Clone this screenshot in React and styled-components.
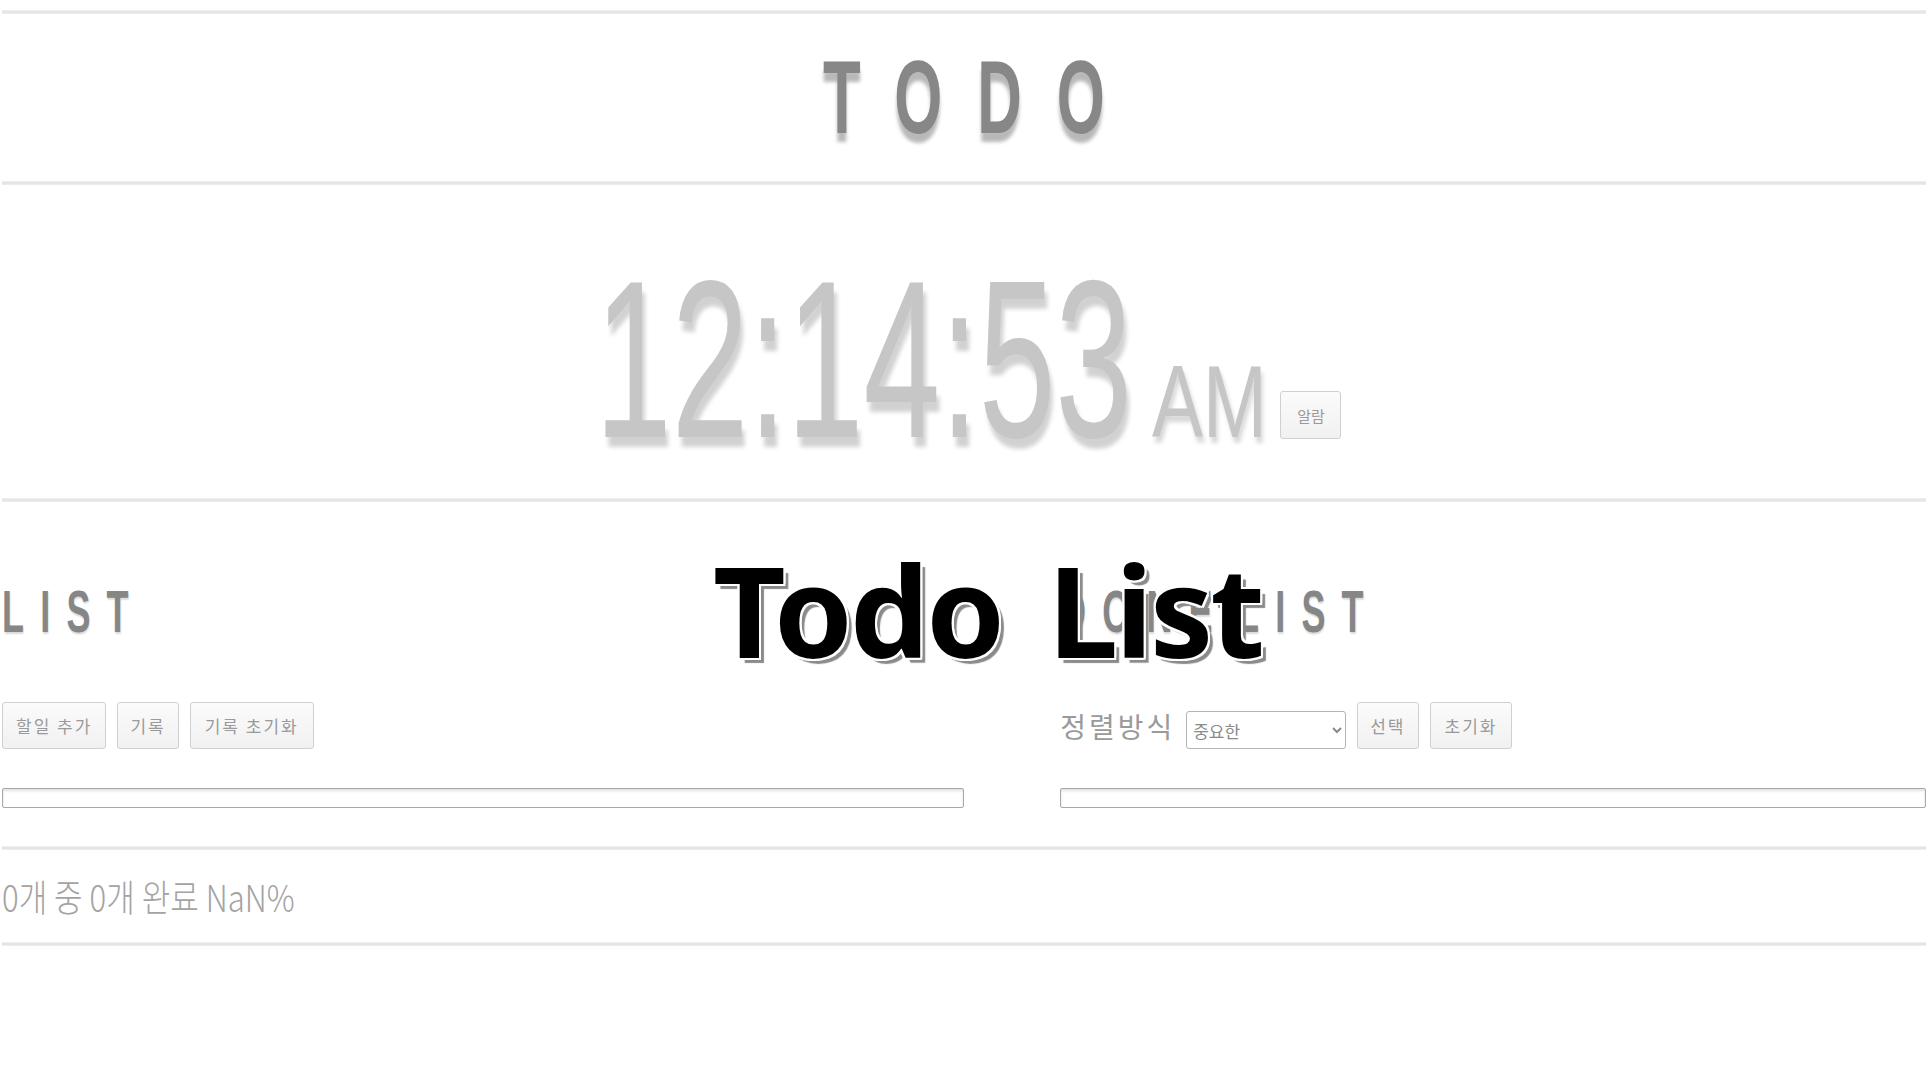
import React from "react";
import styled, { createGlobalStyle } from "styled-components";

const GlobalStyle = createGlobalStyle`
  html, body { margin: 0; padding: 0; background: #ffffff; }
  body { font-family: "Noto Sans CJK KR", "Noto Sans", sans-serif; }
  * { box-sizing: border-box; }
`;

const Page = styled.div`
  position: relative;
  width: 1928px;
  min-height: 1071px;
  padding: 10px 2px 0;
  overflow: hidden;
`;

const Rule = styled.div`
  height: 4px;
  background: linear-gradient(#f1f1f1, #e2e2e2 50%, #eeeeee);
`;

const Header = styled.header`
  height: 167px;
  display: flex;
  align-items: center;
  justify-content: center;
`;

const Title = styled.h1`
  margin: 0;
  padding-left: 58px;
  font-family: "Liberation Sans", Arial, sans-serif;
  font-weight: 700;
  font-size: 103px;
  line-height: 1;
  letter-spacing: 58px;
  color: #878787;
  text-shadow: 0 9px 5px rgba(0, 0, 0, 0.28);
  transform: scaleX(0.6);
  transform-origin: center center;
`;

const ClockSection = styled.section`
  height: 313px;
  display: flex;
  justify-content: center;
  padding-top: 62px;
`;

const ClockRow = styled.div`
  display: flex;
  align-items: baseline;
  height: 224px;
  margin-left: 8px;
`;

const ClockDigits = styled.span`
  display: inline-block;
  font-family: "Liberation Sans", Arial, sans-serif;
  font-size: 224px;
  line-height: 1;
  color: #c6c6c6;
  white-space: nowrap;
  text-shadow: 5px 10px 6px rgba(0, 0, 0, 0.18);
  transform: scaleX(0.616);
  transform-origin: left center;
  margin-right: -335px;
`;

const ClockSuffix = styled.span`
  display: inline-block;
  font-family: "Liberation Sans", Arial, sans-serif;
  font-size: 102px;
  line-height: 1;
  color: #c6c6c6;
  white-space: nowrap;
  text-shadow: 3px 6px 5px rgba(0, 0, 0, 0.16);
  transform: scaleX(0.75);
  transform-origin: left center;
  margin-left: 21px;
  margin-right: -38px;
`;

const Button = styled.button`
  height: ${(p) => p.$h || 47}px;
  padding: 0 ${(p) => p.$px || 13}px;
  border: 1px solid #d0d0d0;
  border-radius: 3px;
  background: linear-gradient(#fbfbfb, #f1f1f1);
  color: #9a9a9a;
  font-family: "Noto Sans CJK KR", sans-serif;
  font-size: 17px;
  letter-spacing: 2px;
  white-space: nowrap;
  cursor: pointer;
`;

const AlarmButton = styled(Button)`
  align-self: flex-end;
  margin-left: 13px;
  margin-bottom: 32px;
  width: 61px;
  height: 48px;
  padding: 0;
  font-size: 15px;
  letter-spacing: 0;
`;

const Columns = styled.section`
  height: 344px;
  display: grid;
  grid-template-columns: 50% 45%;
  column-gap: 5%;
  padding-top: 80px;
`;

const Column = styled.div`
  display: flex;
  flex-direction: column;
`;

const SectionTitle = styled.h2`
  margin: 0;
  height: 60px;
  font-family: "Liberation Sans", Arial, sans-serif;
  font-weight: 700;
  font-size: 60px;
  line-height: 1;
  letter-spacing: 27px;
  word-spacing: -30px;
  color: #868686;
  white-space: nowrap;
  text-shadow: 1px 2px 2px rgba(0, 0, 0, 0.15);
  transform: scaleX(0.6);
  transform-origin: left center;
`;

const Toolbar = styled.div`
  display: flex;
  align-items: center;
  gap: 11px;
  height: 47px;
  margin-top: 60px;
`;

const SortLabel = styled.span`
  font-family: "Noto Sans CJK KR", sans-serif;
  font-size: 28px;
  letter-spacing: 3px;
  color: #9a9a9a;
  white-space: nowrap;
`;

const SortSelect = styled.select`
  width: 160px;
  height: 38px;
  margin-top: 9px;
  border: 1px solid #b4b4b4;
  border-radius: 3px;
  background: #ffffff;
  color: #8a8a8a;
  font-family: "Noto Sans CJK KR", sans-serif;
  font-size: 17px;
  padding: 0 2px;
`;

const ListBox = styled.div`
  height: 20px;
  margin-top: 39px;
  border: 1px solid #a8a8a8;
  border-radius: 2px;
  background: #ffffff;
  box-shadow: inset 0 2px 3px rgba(0, 0, 0, 0.12);
`;

const Status = styled.footer`
  height: 92px;
  display: flex;
  align-items: center;
`;

const StatusText = styled.span`
  display: inline-block;
  font-family: "Noto Sans CJK KR", sans-serif;
  font-size: 37px;
  font-weight: 300;
  line-height: 1;
  color: #a3a3a3;
  white-space: nowrap;
  transform: scaleX(0.84);
  transform-origin: left center;
`;

const Caption = styled.div`
  position: absolute;
  left: 713px;
  top: 546px;
  font-family: "Noto Sans", "Open Sans", sans-serif;
  font-weight: 700;
  font-size: 126px;
  line-height: 1;
  letter-spacing: -3px;
  word-spacing: 16px;
  color: #000000;
  white-space: nowrap;
  text-shadow:
    -2px -2px 0 #fff, 2px -2px 0 #fff, -2px 2px 0 #fff, 2px 2px 0 #fff,
    0 -2px 0 #fff, 0 2px 0 #fff, -2px 0 0 #fff, 2px 0 0 #fff,
    5px 5px 1px #8a8a8a;
  pointer-events: none;
`;

export default function App() {
  return (
    <>
      <GlobalStyle />
      <Page>
        <Rule />
        <Header>
          <Title>TODO</Title>
        </Header>
        <Rule />
        <ClockSection>
          <ClockRow>
            <ClockDigits>12:14:53</ClockDigits>
            <ClockSuffix>AM</ClockSuffix>
            <AlarmButton>알람</AlarmButton>
          </ClockRow>
        </ClockSection>
        <Rule />
        <Columns>
          <Column>
            <SectionTitle>LIST</SectionTitle>
            <Toolbar>
              <Button>할일 추가</Button>
              <Button $px={12}>기록</Button>
              <Button $px={14}>기록 초기화</Button>
            </Toolbar>
            <ListBox />
          </Column>
          <Column>
            <SectionTitle>DONE LIST</SectionTitle>
            <Toolbar>
              <SortLabel>정렬방식</SortLabel>
              <SortSelect defaultValue="important">
                <option value="important">중요한</option>
                <option value="date">날짜순</option>
              </SortSelect>
              <Button $px={12}>선택</Button>
              <Button $px={14}>초기화</Button>
            </Toolbar>
            <ListBox />
          </Column>
        </Columns>
        <Rule />
        <Status>
          <StatusText>0개 중 0개 완료 NaN%</StatusText>
        </Status>
        <Rule />
        <Caption>Todo List</Caption>
      </Page>
    </>
  );
}
